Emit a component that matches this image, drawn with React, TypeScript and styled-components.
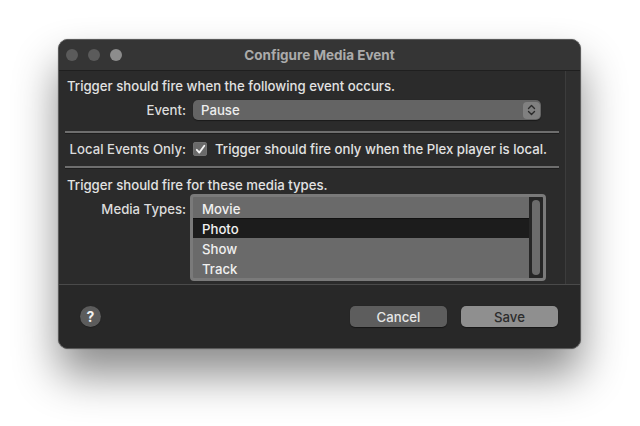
import React from 'react';
import styled, { createGlobalStyle } from 'styled-components';

const GlobalStyle = createGlobalStyle`
  html, body {
    margin: 0;
    padding: 0;
    background: #ffffff;
  }
  body {
    font-family: Inter, "Liberation Sans", sans-serif;
    font-weight: 500;
    -webkit-font-smoothing: antialiased;
  }
`;

const Page = styled.div`
  width: 640px;
  height: 426px;
  display: flex;
  align-items: flex-start;
  padding: 39px 0 0 58px;
  box-sizing: border-box;
  overflow: hidden;
`;

const Window = styled.div`
  width: 523px;
  height: 310px;
  display: flex;
  flex-direction: column;
  border-radius: 10px;
  background: #282828;
  border: 1px solid #5a5a5a;
  box-sizing: border-box;
  overflow: hidden;
  box-shadow: 0 26px 44px rgba(0, 0, 0, 0.45), 0 0 1px rgba(0, 0, 0, 0.6);
`;

const TitleBar = styled.div`
  height: 31px;
  flex: none;
  display: flex;
  align-items: center;
  position: relative;
  background: #353535;
  border-bottom: 1px solid #1f1f1f;
  box-sizing: border-box;
  padding-left: 7px;
  gap: 10px;
`;

const Light = styled.span<{ $tone: string }>`
  width: 12px;
  height: 12px;
  border-radius: 50%;
  background: ${p => p.$tone};
`;

const Title = styled.div`
  position: absolute;
  left: 0;
  right: 0;
  text-align: center;
  font-size: 13.5px;
  font-weight: 700;
  color: #ababab;
  pointer-events: none;
`;

const Body = styled.div`
  height: 214px;
  flex: none;
  display: flex;
  border-bottom: 1px solid #4a4a4a;
  box-sizing: border-box;
`;

const Main = styled.div`
  flex: 1;
  background: #2b2b2b;
  padding: 7px 6px 0 8px;
  display: flex;
  flex-direction: column;
  overflow: hidden;
`;

const ScrollTrack = styled.div`
  width: 14px;
  flex: none;
  background: #2f2f2f;
  border-left: 1px solid #3c3c3c;
`;

const Note = styled.div<{ $top?: number }>`
  font-size: 13.2px;
  line-height: 16px;
  color: #e2e2e2;
  margin-top: ${p => p.$top || 0}px;
  white-space: nowrap;
`;

const FormRow = styled.div<{ $top: number; $align?: string }>`
  display: grid;
  grid-template-columns: 119px auto;
  column-gap: 7px;
  align-items: ${p => p.$align || 'center'};
  margin-top: ${p => p.$top}px;
`;

const Label = styled.div<{ $pad?: number }>`
  text-align: right;
  font-size: 13.2px;
  line-height: 16px;
  color: #dcdcdc;
  white-space: nowrap;
  padding-top: ${p => p.$pad || 0}px;
`;

const Popup = styled.div`
  width: 348px;
  height: 20px;
  border-radius: 5px;
  background: #646464;
  display: flex;
  align-items: center;
  justify-content: space-between;
  padding: 0 1px 0 8px;
  box-sizing: border-box;
  font-size: 13.2px;
  color: #ededed;
  box-shadow: 0 0.5px 1px rgba(0, 0, 0, 0.4);
`;

const Stepper = styled.div`
  width: 17px;
  height: 17px;
  border-radius: 4px;
  background: #808080;
  display: flex;
  align-items: center;
  justify-content: center;
`;

const Separator = styled.div<{ $top: number }>`
  height: 2px;
  margin: ${p => p.$top}px 0 0 -2px;
  background: #6e6e6e;
  border-bottom: 0.5px solid #1e1e1e;
`;

const CheckLine = styled.div`
  display: flex;
  align-items: center;
  gap: 8px;
  font-size: 13.2px;
  color: #e2e2e2;
  white-space: nowrap;
`;

const CheckBox = styled.span`
  width: 14px;
  height: 14px;
  border-radius: 3px;
  background: #6a6a6a;
  display: flex;
  align-items: center;
  justify-content: center;
  box-shadow: inset 0 0 0 0.5px #7a7a7a;
`;

const ListBox = styled.div`
  width: 356px;
  height: 87px;
  margin-left: -3px;
  border: 3px solid #7a7a7a;
  border-radius: 4px;
  box-sizing: border-box;
  background: #6a6a6a;
  display: flex;
  overflow: hidden;
`;

const Rows = styled.div`
  flex: 1;
  padding-top: 1px;
`;

const ListRow = styled.div<{ $selected?: boolean }>`
  height: 20px;
  display: flex;
  align-items: center;
  padding-left: 9px;
  font-size: 13.2px;
  color: #f0f0f0;
  background: ${p => (p.$selected ? '#1c1c1c' : 'transparent')};
  border-top: 1px solid ${p => (p.$selected ? '#111' : 'transparent')};
  box-sizing: border-box;
`;

const ListScroll = styled.div`
  width: 14px;
  flex: none;
  background: #262626;
  padding: 3px 3px;
  box-sizing: border-box;
`;

const ListThumb = styled.div`
  height: 100%;
  border-radius: 4px;
  background: #6c6c6c;
`;

const Footer = styled.div`
  flex: 1;
  display: flex;
  align-items: center;
  padding: 0 22px 0 21px;
  background: #282828;
`;

const HelpButton = styled.div`
  width: 21px;
  height: 21px;
  border-radius: 50%;
  background: #5c5c5c;
  color: #f2f2f2;
  font-size: 14px;
  font-weight: 700;
  display: flex;
  align-items: center;
  justify-content: center;
  box-shadow: 0 0.5px 1px rgba(0, 0, 0, 0.4);
`;

const Spacer = styled.div`
  flex: 1;
`;

const PushButton = styled.div<{ $primary?: boolean }>`
  width: 97px;
  height: 21px;
  border-radius: 5px;
  display: flex;
  align-items: center;
  justify-content: center;
  font-size: 13.2px;
  background: ${p => (p.$primary ? '#8f8f8f' : '#5d5d5d')};
  color: ${p => (p.$primary ? '#2c2c2c' : '#e6e6e6')};
  box-shadow: 0 0.5px 1px rgba(0, 0, 0, 0.45);
  margin-left: ${p => (p.$primary ? 14 : 0)}px;
`;

const Chevrons = () => (
  <svg width="9" height="12" viewBox="0 0 9 12" fill="none">
    <path d="M1.5 4.5 L4.5 1.5 L7.5 4.5" stroke="#2a2a2a" strokeWidth="1.4" strokeLinecap="round" strokeLinejoin="round" />
    <path d="M1.5 7.5 L4.5 10.5 L7.5 7.5" stroke="#2a2a2a" strokeWidth="1.4" strokeLinecap="round" strokeLinejoin="round" />
  </svg>
);

const Check = () => (
  <svg width="11" height="11" viewBox="0 0 11 11" fill="none">
    <path d="M1.8 5.8 L4.3 8.6 L9.3 1.8" stroke="#f4f4f4" strokeWidth="1.8" strokeLinecap="round" strokeLinejoin="round" />
  </svg>
);

const mediaTypes = ['Movie', 'Photo', 'Show', 'Track'];

export default function App() {
  return (
    <>
      <GlobalStyle />
      <Page>
        <Window>
          <TitleBar>
            <Light $tone="#5b5b5b" />
            <Light $tone="#5b5b5b" />
            <Light $tone="#8c8c8c" />
            <Title>Configure Media Event</Title>
          </TitleBar>
          <Body>
            <Main>
              <Note>Trigger should fire when the following event occurs.</Note>
              <FormRow $top={6}>
                <Label>Event:</Label>
                <Popup>
                  <span>Pause</span>
                  <Stepper>
                    <Chevrons />
                  </Stepper>
                </Popup>
              </FormRow>
              <Separator $top={11} />
              <FormRow $top={7}>
                <Label>Local Events Only:</Label>
                <CheckLine>
                  <CheckBox>
                    <Check />
                  </CheckBox>
                  Trigger should fire only when the Plex player is local.
                </CheckLine>
              </FormRow>
              <Separator $top={9} />
              <Note $top={8}>Trigger should fire for these media types.</Note>
              <FormRow $top={1} $align="start">
                <Label $pad={7}>Media Types:</Label>
                <ListBox>
                  <Rows>
                    {mediaTypes.map(t => (
                      <ListRow key={t} $selected={t === 'Photo'}>
                        {t}
                      </ListRow>
                    ))}
                  </Rows>
                  <ListScroll>
                    <ListThumb />
                  </ListScroll>
                </ListBox>
              </FormRow>
            </Main>
            <ScrollTrack />
          </Body>
          <Footer>
            <HelpButton>?</HelpButton>
            <Spacer />
            <PushButton>Cancel</PushButton>
            <PushButton $primary>Save</PushButton>
          </Footer>
        </Window>
      </Page>
    </>
  );
}
